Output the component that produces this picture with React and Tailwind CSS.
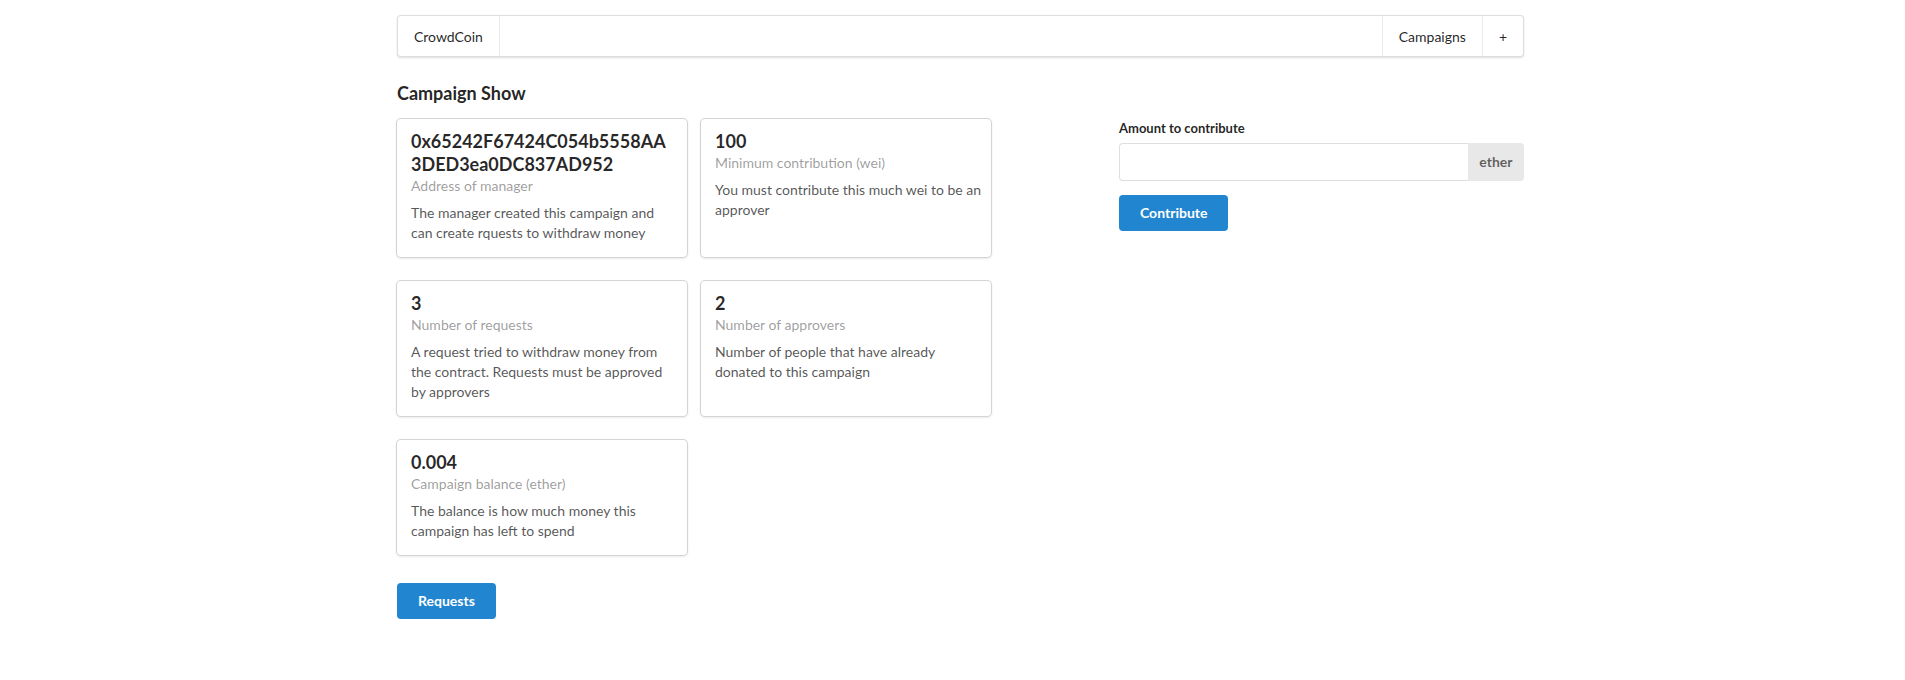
import React from 'react';

const cards = [
  {
    header: '0x65242F67424C054b5558AA3DED3ea0DC837AD952',
    meta: 'Address of manager',
    description: 'The manager created this campaign and can create rquests to withdraw money',
  },
  {
    header: '100',
    meta: 'Minimum contribution (wei)',
    description: 'You must contribute this much wei to be an approver',
  },
  {
    header: '3',
    meta: 'Number of requests',
    description: 'A request tried to withdraw money from the contract. Requests must be approved by approvers',
  },
  {
    header: '2',
    meta: 'Number of approvers',
    description: 'Number of people that have already donated to this campaign',
  },
  {
    header: '0.004',
    meta: 'Campaign balance (ether)',
    description: 'The balance is how much money this campaign has left to spend',
  },
];

function Header() {
  return (
    <div className="mt-[15px] flex h-[42px] rounded-[4px] border border-[rgba(34,36,38,0.15)] bg-white shadow-[0_1px_2px_0_rgba(34,36,38,0.15)]">
      <a className="flex items-center border-r border-[rgba(34,36,38,0.1)] px-[16px] text-[14px] text-[rgba(0,0,0,0.87)]">
        CrowdCoin
      </a>
      <div className="ml-auto flex">
        <a className="flex items-center border-l border-[rgba(34,36,38,0.1)] px-[16px] text-[14px] text-[rgba(0,0,0,0.87)]">
          Campaigns
        </a>
        <a className="flex items-center border-l border-[rgba(34,36,38,0.1)] px-[16px] text-[14px] text-[rgba(0,0,0,0.87)]">
          +
        </a>
      </div>
    </div>
  );
}

function InfoCard({ header, meta, description }) {
  return (
    <div className="rounded-[4px] bg-white p-[14px] shadow-[0_1px_3px_0_#d4d4d5,0_0_0_1px_#d4d4d5]">
      <div className="-mt-[3px] break-words text-[18px] font-bold leading-[23px] text-[rgba(0,0,0,0.85)]">
        {header}
      </div>
      <div className="text-[14px] leading-[20px] text-[rgba(0,0,0,0.4)]">{meta}</div>
      {/* a touch wider: local text renders slightly wider than the reference */}
      <div className="mt-[7px] -mr-[6px] text-[14px] leading-[20px] text-[rgba(0,0,0,0.68)]">{description}</div>
    </div>
  );
}

export default function App() {
  return (
    <div className="min-h-[680px] bg-white font-['Lato',sans-serif] text-[14px] text-[rgba(0,0,0,0.87)]">
      <div className="ml-[397px] w-[1127px]">
        <Header />

        <h3 className="mt-[25px] mb-[14px] text-[18px] font-bold leading-[23px] text-[rgba(0,0,0,0.87)]">
          Campaign Show
        </h3>

        <div className="flex gap-[28px]">
          {/* Left: campaign details */}
          <div className="w-[694px]">
            <div className="grid grid-cols-[290px_290px] gap-x-[14px] gap-y-[24px]">
              {cards.map((c) => (
                <InfoCard key={c.meta} {...c} />
              ))}
            </div>
            <button className="mt-[28px] rounded-[4px] bg-[#2185d0] px-[21px] py-[11px] text-[14px] font-bold leading-[14px] text-white">
              Requests
            </button>
          </div>

          {/* Right: contribute form */}
          <div className="w-[405px]">
            <label className="mb-[5px] block text-[13px] font-bold leading-[18.5px] text-[rgba(0,0,0,0.87)]">
              Amount to contribute
            </label>
            <div className="flex h-[38px]">
              <input
                className="min-w-0 flex-1 rounded-l-[4px] border border-r-0 border-[rgba(34,36,38,0.15)] px-[14px] text-[14px] outline-none"
                type="text"
              />
              <div className="flex items-center rounded-r-[4px] bg-[#e8e8e8] px-[11.5px] text-[14px] font-bold text-[rgba(0,0,0,0.6)]">
                ether
              </div>
            </div>
            <button className="mt-[14px] rounded-[4px] bg-[#2185d0] px-[21px] py-[11px] text-[14px] font-bold leading-[14px] text-white">
              Contribute
            </button>
          </div>
        </div>
      </div>
    </div>
  );
}
